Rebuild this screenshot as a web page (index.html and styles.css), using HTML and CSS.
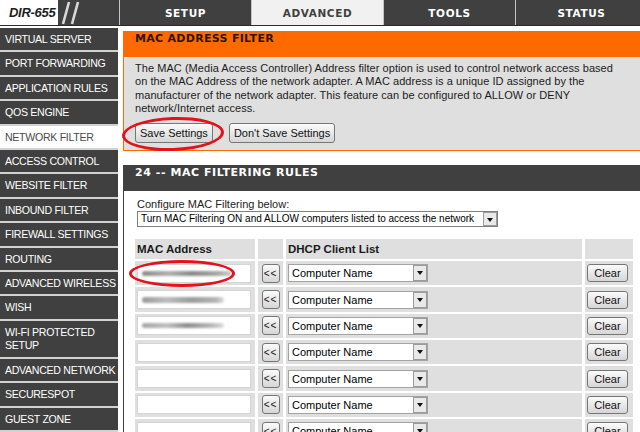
FILE: index.html
```html
<!DOCTYPE html>
<html lang="en">
<head>
    <meta charset="UTF-8">
    <title>D-Link DIR-655 | Network Filter</title>
    <link rel="stylesheet" href="styles.css">
</head>
<body>
    <div class="topbar">
        <div class="brand">
            <div class="logo">DIR-655</div>
            <svg class="slashes" width="22" height="25" viewBox="0 0 22 25">
                <path d="M2 24 L8 2 M11 24 L17 2" stroke="#d8d8d8" stroke-width="2.6" fill="none"/>
            </svg>
        </div>
        <div class="tab">SETUP</div>
        <div class="tab active">ADVANCED</div>
        <div class="tab">TOOLS</div>
        <div class="tab">STATUS</div>
    </div>

    <div class="layout">
        <div class="sidebar">
            <a href="#">VIRTUAL SERVER</a>
            <a href="#">PORT FORWARDING</a>
            <a href="#">APPLICATION RULES</a>
            <a href="#">QOS ENGINE</a>
            <a href="#" class="active">NETWORK FILTER</a>
            <a href="#">ACCESS CONTROL</a>
            <a href="#">WEBSITE FILTER</a>
            <a href="#">INBOUND FILTER</a>
            <a href="#">FIREWALL SETTINGS</a>
            <a href="#">ROUTING</a>
            <a href="#">ADVANCED WIRELESS</a>
            <a href="#">WISH</a>
            <a href="#">WI-FI PROTECTED<br>SETUP</a>
            <a href="#">ADVANCED NETWORK</a>
            <a href="#">SECURESPOT</a>
            <a href="#">GUEST ZONE</a>
        </div>

        <div class="main">
            <div class="box orange">
                <h2>MAC ADDRESS FILTER</h2>
                <div class="box-body">
                    <p>The MAC (Media Access Controller) Address filter option is used to control network access based<br>
                    on the MAC Address of the network adapter. A MAC address is a unique ID assigned by the<br>
                    manufacturer of the network adapter. This feature can be configured to ALLOW or DENY<br>
                    network/Internet access.</p>
                    <div class="actions">
                        <span class="circled save"><button class="btn">Save Settings</button></span>
                        <button class="btn">Don't Save Settings</button>
                    </div>
                </div>
            </div>

            <div class="box dark">
                <h2>24 -- MAC FILTERING RULES</h2>
                <div class="box-body">
                    <div class="label">Configure MAC Filtering below:</div>
                    <div class="select wide">Turn MAC Filtering ON and ALLOW computers listed to access the network<span class="drop"></span></div>

                    <table class="rules">
                        <thead>
                            <tr>
                                <th class="c-mac">MAC Address</th>
                                <th class="c-copy"></th>
                                <th class="c-dhcp">DHCP Client List</th>
                                <th class="c-clear"></th>
                            </tr>
                        </thead>
                        <tbody id="ruleRows"></tbody>
                    </table>
                </div>
            </div>
        </div>
    </div>

    <script>
        // first three entries were blurred out in the original capture
        let rows = [
            { mac: "long", circled: true },
            { mac: "short" },
            { mac: "twist" },
            {}, {}, {}, {}
        ];

        let body = document.getElementById("ruleRows");
        rows.forEach(row => {
            let tr = document.createElement("tr");
            let smudge = row.mac ? `<span class="smudge ${row.mac}"></span>` : "";
            let field = `<div class="field">${smudge}</div>`;
            if (row.circled) field = `<span class="circled mac">${field}</span>`;
            tr.innerHTML = `
                <td>${field}</td>
                <td class="center"><button class="btn copy">&lt;&lt;</button></td>
                <td><div class="select name">Computer Name<span class="drop"></span></div></td>
                <td><button class="btn clear">Clear</button></td>`;
            body.appendChild(tr);
        });
    </script>
</body>
</html>
```

FILE: styles.css
```css
html, body {
    margin: 0;
    padding: 0;
    overflow: hidden;
}
body {
    font-family: "Liberation Sans", Arial, sans-serif;
    font-size: 11px;
    color: #222;
    background: #fff;
    width: 660px;
}

/* top navigation */
.topbar {
    display: flex;
    gap: 1px;
    height: 25px;
    background: #c4c4c4;
    border-bottom: 1px solid #2c2c2c;
    margin-bottom: 2px;
}
.brand {
    width: 119px;
    flex: none;
    display: flex;
    align-items: center;
    background: #404040;
}
.logo {
    width: 58px;
    height: 25px;
    box-sizing: border-box;
    padding-left: 9px;
    display: flex;
    align-items: center;
    background: #fff;
    color: #1e1e1e;
    font: italic bold 13px "Liberation Sans", Arial, sans-serif;
    letter-spacing: -0.3px;
}
.slashes {
    margin-left: 3px;
}
.tab {
    width: 131px;
    flex: none;
    display: flex;
    align-items: center;
    justify-content: center;
    background: #404040;
    color: #fff;
    font: bold 10.5px "DejaVu Sans", Verdana, sans-serif;
    letter-spacing: 0.6px;
}
.tab.active {
    background: #f1f1f1;
    color: #404040;
}

.layout {
    display: flex;
    align-items: flex-start;
}

/* left menu */
.sidebar {
    width: 118px;
    flex: none;
}
.sidebar a {
    display: block;
    background: #404040;
    color: #fff;
    text-decoration: none;
    padding: 5px 0 4px 5px;
    line-height: 13.4px;
    border-bottom: 2px solid #d2d2d2;
    font-size: 10.6px;
    letter-spacing: -0.3px;
    white-space: nowrap;
}
.sidebar a.active {
    background: #fff;
    color: #4a4a4a;
}

/* content */
.main {
    margin-left: 5px;
    padding-top: 3px;
    width: 530px;
    flex: none;
}
.box {
    border: 1px solid #404040;
    margin-bottom: 14px;
}
.box h2 {
    margin: 0;
    height: 25px;
    line-height: 25px;
    padding-left: 11px;
    font: bold 11px "DejaVu Sans", Verdana, sans-serif;
    letter-spacing: 0.3px;
}
.box.orange {
    border-color: #ff6a00;
}
.box.orange h2 {
    background: #ff6a00;
    color: #2a160a;
}
.box.orange .box-body {
    background: #dfdfdf;
    padding: 5px 11px 7px;
}
.box.orange p {
    margin: 0;
    line-height: 13.3px;
    color: #1c1c1c;
    letter-spacing: 0.05px;
}
.box.dark h2 {
    background: #404040;
    color: #fff;
    letter-spacing: 0.55px;
}
.box.dark .box-body {
    padding: 7px 0 20px 8px;
}

.actions {
    margin-top: 8px;
    display: flex;
    gap: 16px;
}

.btn {
    font-family: "Liberation Sans", Arial, sans-serif;
    font-size: 11px;
    color: #111;
    height: 20px;
    padding: 0 4px;
    border: 1px solid #767676;
    border-radius: 3px;
    background: linear-gradient(#fbfbfb, #e4e4e4 60%, #d6d6d6);
    cursor: pointer;
}

/* hand-drawn red marks over the screenshot */
.circled {
    position: relative;
    display: inline-block;
}
.circled::after {
    content: "";
    position: absolute;
    border: 3px solid #e3121c;
    border-radius: 50%;
    pointer-events: none;
}
.circled.save::after {
    left: -13px;
    right: -11px;
    top: -6px;
    bottom: -8px;
    transform: rotate(-2deg);
}
.circled.mac::after {
    left: -8px;
    right: 18px;
    top: -4px;
    bottom: -4px;
}

.label {
    padding-left: 5px;
    line-height: 13px;
}
.select {
    position: relative;
    box-sizing: border-box;
    background: #fff;
    border: 1px solid #7f7f7f;
    line-height: 14px;
    padding-left: 3px;
    color: #000;
    white-space: nowrap;
    overflow: hidden;
}
.select.wide {
    margin-left: 5px;
    width: 361px;
    height: 16px;
    font-size: 10px;
}
.select.name {
    width: 140px;
    height: 18px;
    line-height: 16px;
    border-color: #a3a3a3;
}
.drop {
    position: absolute;
    right: 0;
    top: 0;
    bottom: 0;
    width: 14px;
    box-sizing: border-box;
    border: 1px solid #9b9b9b;
    background: #e9e9e9;
}
.drop::after {
    content: "";
    position: absolute;
    left: 3px;
    top: 5px;
    border-left: 3px solid transparent;
    border-right: 3px solid transparent;
    border-top: 4px solid #111;
}

/* rules table */
.rules {
    margin-top: 10px;
    border-spacing: 3px 2px;
}
.rules th,
.rules td {
    background: #dfdfdf;
    padding: 0 2px;
    box-sizing: border-box;
}
.rules th {
    height: 20px;
    text-align: left;
    font-size: 11.5px;
    color: #1a1a1a;
}
.rules td {
    height: 24.3px;
    vertical-align: middle;
}
.rules .center {
    text-align: center;
}
.c-mac { width: 120px; }
.c-copy { width: 25px; }
.c-dhcp { width: 296px; }
.c-clear { width: 48px; }

.field {
    width: 114px;
    height: 19px;
    box-sizing: border-box;
    border: 1px solid #d4d4d4;
    background: #fff;
    display: flex;
    align-items: center;
}
.rules td > .circled {
    display: block;
}
.smudge {
    display: block;
    height: 5px;
    margin-left: 4px;
    border-radius: 3px;
    filter: blur(1.3px);
}
.smudge.long {
    width: 90px;
    background: linear-gradient(90deg, #8c8c8c, #b0b0b0 30%, #8a8a8a 55%, #a8a8a8 85%, #d0d0d0);
}
.smudge.short {
    width: 82px;
    height: 6px;
    background: linear-gradient(90deg, #9a9a9a, #bcbcbc 30%, #9c9c9c 60%, #b4b4b4 90%, #dcdcdc);
}
.smudge.twist {
    width: 82px;
    background: linear-gradient(90deg, #a4a4a4, #c0c0c0 30%, #8e8e8e 55%, #b8b8b8 85%, #dedede);
}

.btn.copy {
    width: 18px;
    height: 19px;
    padding: 0;
    font-size: 10px;
    letter-spacing: 1px;
}
.btn.clear {
    width: 41px;
    height: 18px;
    padding: 0;
}
```
